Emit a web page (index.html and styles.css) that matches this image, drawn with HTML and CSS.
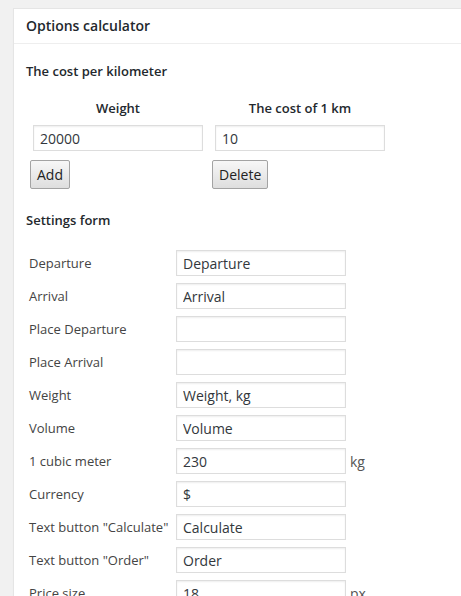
FILE: index.html
```html
<!DOCTYPE html>
<html>
<head>
<meta charset="utf-8">
<link rel="stylesheet" href="styles.css">
</head>
<body>
<div class="panel">
  <h2 class="panel-header">Options calculator</h2>
  <div class="inside">
    <h3 class="section-title first">The cost per kilometer</h3>
    <div class="cost-grid">
      <div class="col-head">Weight</div>
      <div class="col-head">The cost of 1 km</div>
      <input class="field cost-field" type="text" value="20000">
      <input class="field cost-field" type="text" value="10">
      <button class="btn" type="button">Add</button>
      <button class="btn" type="button">Delete</button>
    </div>
    <h3 class="section-title second">Settings form</h3>
    <div class="settings">
      <div class="row"><span class="label">Departure</span><input class="field" type="text" value="Departure"></div>
      <div class="row"><span class="label">Arrival</span><input class="field" type="text" value="Arrival"></div>
      <div class="row"><span class="label">Place Departure</span><input class="field" type="text" value=""></div>
      <div class="row"><span class="label">Place Arrival</span><input class="field" type="text" value=""></div>
      <div class="row"><span class="label">Weight</span><input class="field" type="text" value="Weight, kg"></div>
      <div class="row"><span class="label">Volume</span><input class="field" type="text" value="Volume"></div>
      <div class="row"><span class="label">1 cubic meter</span><input class="field" type="text" value="230"><span class="unit">kg</span></div>
      <div class="row"><span class="label">Currency</span><input class="field" type="text" value="$"></div>
      <div class="row"><span class="label">Text button "Calculate"</span><input class="field" type="text" value="Calculate"></div>
      <div class="row"><span class="label">Text button "Order"</span><input class="field" type="text" value="Order"></div>
      <div class="row"><span class="label">Price size</span><input class="field" type="text" value="18"><span class="unit">px</span></div>
    </div>
  </div>
</div>
</body>
</html>
```
FILE: styles.css
```css
html, body {
  margin: 0;
  padding: 0;
  background: #f1f1f1;
  font-family: "Open Sans", "Liberation Sans", sans-serif;
  color: #444;
  overflow: hidden;
}

.panel {
  margin: 8px 0 0 13px;
  width: 520px;
  background: #fff;
  border: 1px solid #e5e5e5;
  box-shadow: 0 1px 1px rgba(0, 0, 0, 0.04);
  padding-bottom: 40px;
}

.panel-header {
  margin: 0;
  height: 34px;
  line-height: 34px;
  padding: 0 12px;
  font-size: 14px;
  font-weight: 600;
  color: #23282d;
  border-bottom: 1px solid #eee;
}

.inside {
  padding: 0 12px;
}

.section-title {
  margin: 0;
  font-size: 13px;
  line-height: 18px;
  font-weight: 600;
  color: #23282d;
}

.section-title.first {
  margin-top: 18px;
}

.section-title.second {
  margin-top: 22px;
}

.cost-grid {
  display: grid;
  grid-template-columns: 176px 176px;
  column-gap: 6px;
  row-gap: 8px;
  padding-left: 4px;
  margin-top: 19px;
}

.col-head {
  text-align: center;
  font-size: 13px;
  line-height: 18px;
  font-weight: 600;
  color: #23282d;
}

.field {
  box-sizing: border-box;
  width: 170px;
  height: 26px;
  margin: 0;
  padding: 0 6px;
  border: 1px solid #ddd;
  box-shadow: inset 0 1px 2px rgba(0, 0, 0, 0.07);
  background: #fff;
  font-family: "Open Sans", "Liberation Sans", sans-serif;
  font-size: 14px;
  color: #32373c;
  outline: none;
}

.cost-field {
  margin-left: 3px;
}

.btn {
  justify-self: start;
  margin-top: 1px;
  height: 29px;
  padding: 0 6px;
  border: 1px solid #a3a3a3;
  border-radius: 2px;
  background: linear-gradient(#f7f7f7, #dedede);
  font-family: "Open Sans", "Liberation Sans", sans-serif;
  font-size: 14px;
  color: #222;
}

.settings {
  margin-top: 21px;
  padding-left: 3px;
  display: flex;
  flex-direction: column;
  gap: 7px;
}

.row {
  display: grid;
  grid-template-columns: 147px 170px auto;
  align-items: center;
}

.label {
  font-size: 13px;
  color: #444;
  white-space: nowrap;
}

.unit {
  margin-left: 4px;
  font-size: 14px;
  color: #555;
}
```
